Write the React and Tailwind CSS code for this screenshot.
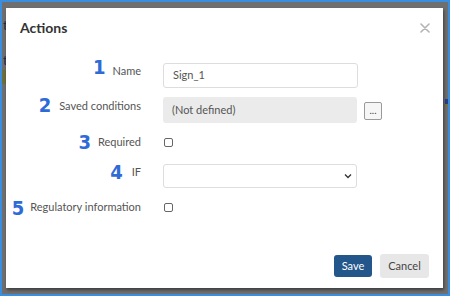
import React from "react";

function Digit({ children, className = "" }) {
  return (
    <span
      className={"text-[20px] leading-none font-bold text-[#2f6bd6] " + className}
      style={{ fontFamily: '"Liberation Sans Narrow", "DejaVu Sans Condensed", "Liberation Sans", sans-serif' }}
    >
      {children}
    </span>
  );
}

export default function App() {
  return (
    <div
      className="relative w-[450px] h-[296px] border-2 border-[#3a8ee0] bg-[#6f6f6f] pl-[4px] pt-[6px] pr-[5px] pb-[6px] overflow-hidden"
      style={{ fontFamily: 'Lato, "Open Sans", sans-serif' }}
    >
      <span className="absolute left-[1px] top-[14px] text-[13px] text-[#1d2a44]">t</span>
      <span className="absolute left-[1px] top-[49px] text-[13px] text-[#1d2a44]">t</span>
      <span className="absolute left-0 top-[68px] w-[4px] h-[14px] bg-[#6e6e3e]"></span>
      <span className="absolute right-0 top-[97px] w-[3px] h-[5px] bg-[#2a3f8a]"></span>
      <span className="absolute right-0 top-[102px] w-[3px] h-[3px] bg-[#7a7340]"></span>

      <div className="relative w-full h-full bg-white shadow-[1px_2px_3px_rgba(0,0,0,0.45)] flex flex-col">
        <div className="flex items-center justify-between pl-[14px] pr-[14px] pt-[10px] h-[30px]">
          <span className="text-[14px] font-bold text-[#333] leading-none">Actions</span>
          <svg width="10" height="10" viewBox="0 0 10 10" className="mr-[-1px]">
            <path d="M1 1 L9 9 M9 1 L1 9" stroke="#b3b3b3" strokeWidth="1.6" strokeLinecap="round" />
          </svg>
        </div>

        <div className="flex flex-col mt-[25px]">
          {/* Row 1 */}
          <div className="flex items-start h-[25px]">
            <div className="w-[135px] shrink-0 flex items-center justify-end">
              <Digit className="mt-[-6px]">1</Digit>
              <span className="text-[11px] leading-none text-[#555] ml-[7px] mt-[1px]">Name</span>
            </div>
            <div className="ml-[22px] w-[195px] h-[25px] border border-[#ddd] rounded-[3px] flex items-center pl-[9px] text-[11px] text-[#555]">
              Sign_1
            </div>
          </div>

          {/* Row 2 */}
          <div className="flex items-start h-[26px] mt-[9px]">
            <div className="w-[135px] shrink-0 flex items-center justify-end">
              <Digit className="mt-[-2px]">2</Digit>
              <span className="text-[11px] leading-none text-[#555] ml-[8px] mt-[-1px]">Saved conditions</span>
            </div>
            <div className="ml-[22px] w-[194px] h-[26px] bg-[#ebebeb] rounded-[3px] flex items-center pl-[9px] text-[11px] text-[#555]">
              (Not defined)
            </div>
            <div className="ml-[7px] mt-[5px] w-[18px] h-[18px] border border-[#9a9a9a] bg-[#f6f6f6] rounded-[2px] flex items-center justify-center text-[10px] leading-none text-[#444] pb-[3px]">
              ...
            </div>
          </div>

          {/* Row 3 */}
          <div className="flex items-center h-[20px] mt-[9px]">
            <div className="w-[135px] shrink-0 flex items-center justify-end">
              <Digit>3</Digit>
              <span className="text-[11px] leading-none text-[#555] ml-[7px] mt-[-1px]">Required</span>
            </div>
            <div className="ml-[23px] w-[9px] h-[9px] border border-[#666] rounded-[2px]"></div>
          </div>

          {/* Row 4 */}
          <div className="flex items-start h-[24px] mt-[12px]">
            <div className="w-[135px] shrink-0 flex items-center justify-end">
              <Digit className="mt-[-2px]">4</Digit>
              <span className="text-[11px] leading-none text-[#555] ml-[9px] mt-[-3px]">IF</span>
            </div>
            <div className="ml-[22px] w-[194px] h-[24px] border border-[#ddd] rounded-[3px] flex items-center justify-end pr-[4px]">
              <svg width="8" height="6" viewBox="0 0 8 6">
                <path d="M1 1.5 L4 4.5 L7 1.5" stroke="#333" strokeWidth="1.3" fill="none" />
              </svg>
            </div>
          </div>

          {/* Row 5 */}
          <div className="flex items-center h-[20px] mt-[9px]">
            <div className="w-[135px] shrink-0 flex items-center justify-end">
              <Digit className="mt-[2px]">5</Digit>
              <span className="text-[11px] leading-none text-[#555] ml-[6px] mt-[-1px]">Regulatory information</span>
            </div>
            <div className="ml-[23px] w-[9px] h-[9px] border border-[#666] rounded-[2px]"></div>
          </div>
        </div>

        <div className="flex-1"></div>
        <div className="flex items-center justify-end gap-[8px] pr-[14px] pb-[10px]">
          <div className="w-[38px] h-[22px] bg-[#23578c] rounded-[3px] flex items-center justify-center text-[11px] text-white">
            Save
          </div>
          <div className="w-[49px] h-[24px] bg-[#e7e7e7] rounded-[3px] flex items-center justify-center text-[11px] text-[#444]">
            Cancel
          </div>
        </div>
      </div>
    </div>
  );
}
